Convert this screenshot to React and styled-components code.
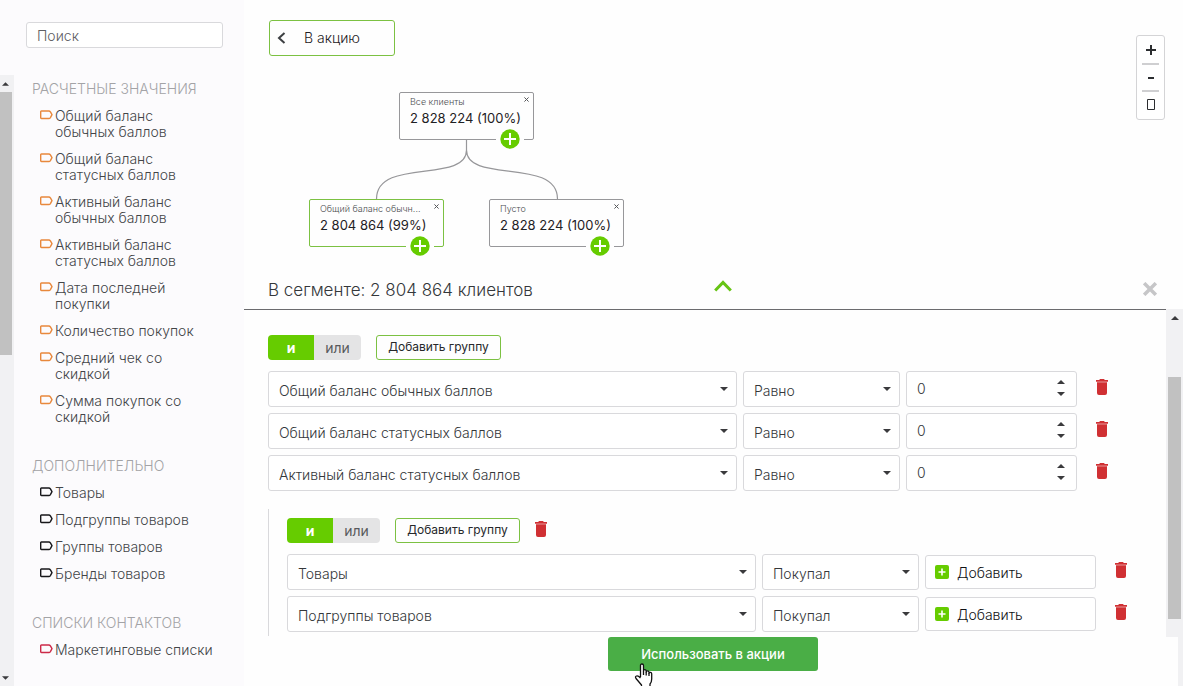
import React, { useState } from "react";
import styled, { createGlobalStyle, css } from "styled-components";

const Global = createGlobalStyle`
  *, *::before, *::after { box-sizing: border-box; }
  body { margin: 0; background: #fefefe; }
  body, button, input, select { font-family: Inter, "Open Sans", sans-serif; font-weight: 300; }
  button { padding: 0; border: 0; background: none; cursor: pointer; }
  h1, h2, ul, p { margin: 0; padding: 0; font-weight: 300; }
  ul { list-style: none; }
  svg { display: block; flex: none; }
`;

const Page = styled.div`
  display: flex;
  height: 100vh;
  color: #34373a;
  overflow: hidden;
`;

/* ---------- sidebar ---------- */
const Sidebar = styled.aside`
  flex: none;
  width: 244px;
  display: flex;
  flex-direction: column;
  background: #fcfbfd;
`;
const SearchBar = styled.div`
  height: 75px;
  flex: none;
  padding: 22px 21px 0 26px;
`;
const Search = styled.input`
  display: block;
  width: 100%;
  height: 26px;
  padding: 0 10px;
  border: 1px solid #d9d9dc;
  border-radius: 3px;
  background: #fff;
  font-size: 14px;
  color: #444;
  &::placeholder { color: #606063; opacity: 1; }
`;
const SidebarBody = styled.div`
  flex: 1;
  min-height: 0;
  display: flex;
`;
const Track = styled.div`
  flex: none;
  display: flex;
  flex-direction: column;
  align-items: ${(p) => (p.$side === "left" ? "flex-start" : "center")};
  width: ${(p) => (p.$side === "left" ? 14 : 17)}px;
  background: #f1f1f3;
`;
const TrackEnd = styled.div`
  flex: none;
  display: flex;
  width: ${(p) => p.$w}px;
  height: 17px;
  align-items: center;
  justify-content: center;
`;
const Thumb = styled.div`
  width: ${(p) => (p.$side === "left" ? 12 : 13)}px;
  height: ${(p) => p.$size};
  margin-top: ${(p) => p.$offset || "0"};
  background: #c1c1c1;
`;
const Spacer = styled.div`
  flex: 1;
`;
const Sections = styled.nav`
  flex: 1;
  min-width: 0;
  padding: 4px 29px 0 18px;
  display: flex;
  flex-direction: column;
  gap: 31px;
`;
const SectionTitle = styled.h2`
  font-size: 14px;
  line-height: 20px;
  color: #a3a3a6;
`;
const Items = styled.ul`
  display: flex;
  flex-direction: column;
  gap: 11px;
  padding: 9px 0 0 8px;
`;
const ItemLink = styled.a`
  display: flex;
  gap: 2px;
  font-size: 14px;
  line-height: 16px;
  color: #434548;
  text-decoration: none;
  svg { margin-top: 2px; color: ${(p) => p.$color}; }
`;

/* ---------- tree canvas ---------- */
const Main = styled.main`
  flex: 1;
  min-width: 0;
  display: flex;
  flex-direction: column;
`;
const Canvas = styled.section`
  position: relative;
  flex: none;
  height: 268px;
  padding: 20px 25px;
`;
const BackButton = styled.button`
  display: flex;
  align-items: center;
  gap: 18px;
  width: 126px;
  height: 36px;
  padding: 0 7px 1px;
  border: 1px solid #7cc142;
  border-radius: 3px;
  font-size: 14px;
  color: #1f2124;
`;
const Links = styled.svg`
  position: absolute;
  left: 0;
  top: 0;
`;
const Node = styled.div`
  position: absolute;
  left: ${(p) => p.$x}px;
  top: ${(p) => p.$y}px;
  width: 135px;
  height: 48px;
  padding: 4px 10px;
  border: 1px solid ${(p) => (p.$active ? "#7cc142" : "#97979a")};
  border-radius: 2px;
  background: #fefefe;
`;
const NodeTitle = styled.p`
  width: 100px;
  font-size: 9px;
  line-height: 10px;
  color: #4c4e51;
  white-space: nowrap;
`;
const NodeValue = styled.p`
  padding-top: 1px;
  font-size: 13px;
  line-height: 20px;
  font-weight: 400;
  color: #1f2124;
  white-space: nowrap;
`;
const NodeClose = styled.button`
  position: absolute;
  right: 4px;
  top: 4px;
`;
const NodeAdd = styled.button`
  position: absolute;
  right: 9px;
  bottom: -10px;
  padding: 0 4px;
  background: #fefefe;
`;
const ZoomBox = styled.div`
  position: absolute;
  right: 18px;
  top: 35px;
  width: 29px;
  height: 85px;
  padding: 0 5px;
  border: 1px solid #d4d4d6;
  border-radius: 3px;
  background: #fff;
`;
const ZoomButton = styled.button`
  display: flex;
  align-items: center;
  justify-content: center;
  width: 100%;
  height: 27px;
  color: #2b2d30;
  & + & { border-top: 2px solid #cfcfd1; }
`;

/* ---------- segment panel ---------- */
const PanelHeader = styled.header`
  flex: none;
  height: 41px;
  padding: 0 26px 0 24px;
  display: grid;
  grid-template-columns: 1fr auto 1fr;
  align-items: center;
`;
const PanelTitle = styled.h1`
  padding-top: 3px;
  font-size: 17px;
  line-height: 24px;
  white-space: nowrap;
`;
const Collapse = styled.button`
  padding: 0 0 5px 20px;
`;
const PanelClose = styled.button`
  justify-self: end;
`;
const PanelBody = styled.div`
  flex: 1;
  min-height: 0;
  display: flex;
`;
const Rules = styled.div`
  flex: 1;
  min-width: 0;
  padding: 25px 39px 0 24px;
  border-top: 1px solid #6b6b6e;
  overflow: hidden;
`;
const Group = styled.div`
  ${(p) =>
    p.$nested
      ? css`
          margin-top: 18px;
          padding: 9px 0 4px 18px;
          border-left: 1px solid #d9d9dc;
        `
      : css`
          padding-right: 19px;
        `}
`;
const GroupHead = styled.div`
  display: flex;
  align-items: center;
  gap: 15px;
  margin-bottom: 11px;
`;
const Toggle = styled.div`
  display: flex;
  border-radius: 4px;
  overflow: hidden;
`;
const ToggleButton = styled.button`
  width: ${(p) => (p.$on ? 46 : 47)}px;
  height: 25px;
  font-size: 14px;
  font-weight: ${(p) => (p.$on ? 700 : 400)};
  color: ${(p) => (p.$on ? "#fff" : "#58595c")};
  background: ${(p) => (p.$on ? "#66cc00" : "#e4e4e5")};
`;
const AddGroup = styled.button`
  height: 25px;
  width: 125px;
  padding-bottom: 2px;
  border: 1px solid #7cc142;
  border-radius: 3px;
  font-size: 12px;
  font-weight: 400;
  color: #26282b;
`;
const Rows = styled.div`
  display: flex;
  flex-direction: column;
  gap: 6px;
`;
const Row = styled.div`
  display: grid;
  grid-template-columns: minmax(0, 469fr) minmax(0, 157fr) minmax(0, 171fr) 25px;
  gap: 6px;
`;
const Field = styled.div`
  position: relative;
  height: 36px;
`;
const boxed = css`
  width: 100%;
  height: 36px;
  border: 1px solid #d9d9dc;
  border-radius: 3px;
  background: #fff;
  font-size: 14px;
  color: #34373a;
`;
const Select = styled.select`
  ${boxed}
  appearance: none;
  padding: 2px 24px 0 10px;
`;
const Caret = styled.svg`
  position: absolute;
  right: 9px;
  top: 16px;
  pointer-events: none;
`;
const NumberInput = styled.input`
  ${boxed}
  padding: 0 30px 1px 10px;
  appearance: textfield;
  &::-webkit-inner-spin-button { appearance: none; }
`;
const Steppers = styled.div`
  position: absolute;
  right: 12px;
  top: 5px;
  display: flex;
  flex-direction: column;
`;
const Step = styled.button`
  display: flex;
  align-items: center;
  height: 12px;
`;
const AddValue = styled.button`
  ${boxed}
  height: 34px;
  margin-top: 1px;
  display: flex;
  align-items: center;
  gap: 8px;
  padding: 0 9px;
  color: #0f1114;
`;
const Delete = styled.button`
  justify-self: end;
  align-self: start;
  margin-top: 8px;
`;
const DeleteGroup = styled.button`
  margin-bottom: 3px;
`;
const Footer = styled.footer`
  flex: none;
  height: 49px;
  display: flex;
  justify-content: center;
  align-items: flex-start;
  padding-left: 4px;
  border-right: 5px solid #f1f1f3;
`;
const Submit = styled.button`
  position: relative;
  width: 210px;
  height: 34px;
  border-radius: 3px;
  background: #4aae46;
  color: #fff;
  font-size: 13px;
  font-weight: 500;
`;
const Cursor = styled.svg`
  position: absolute;
  left: 26px;
  top: 26px;
`;

/* ---------- drawings ---------- */
const Tag = () => (
  <svg width="13" height="10" viewBox="0 0 13 10" fill="none" stroke="currentColor" strokeWidth="1.4" strokeLinejoin="round">
    <path d="M1.400 1h7.400q1 0 1.600.9L12 4.700 10.400 7.600q-.6.9-1.600.9H1.400q-.7 0-.7-.7V1.700Q.7 1 1.400 1z" />
  </svg>
);
const Triangle = ({ up, w = 8, h = 4 }) => (
  <svg width={w} height={h} viewBox="0 0 8 4" fill="#3a3a3d">
    <path d={up ? "M0 4L4 0l4 4z" : "M0 0h8L4 4z"} />
  </svg>
);
const Trash = () => (
  <svg width="12" height="16" viewBox="0 0 12 16" fill="#d03033">
    <path d="M4 0h4l.8 1H12v1.700H0V1h3.200zM1 3.200h10V14q0 2-2 2H3q-2 0-2-2z" />
  </svg>
);
const PlusCircle = () => (
  <svg width="20" height="20" viewBox="0 0 20 20">
    <circle cx="10" cy="10" r="9.700" fill="#66cc00" />
    <path d="M10 4v12M4 10h12" stroke="#fff" strokeWidth="2" />
  </svg>
);
const PlusSquare = () => (
  <svg width="14" height="14" viewBox="0 0 14 14">
    <rect width="14" height="14" rx="2" fill="#66cc00" />
    <path d="M7 3.500v7M3.500 7h7" stroke="#fff" strokeWidth="1.600" />
  </svg>
);
const Cross = ({ size, color, width }) => (
  <svg width={size} height={size} viewBox="0 0 12 12" stroke={color} strokeWidth={width}>
    <path d="M1 1l10 10M11 1L1 11" />
  </svg>
);

/* ---------- data ---------- */
const sections = [
  {
    title: "РАСЧЕТНЫЕ ЗНАЧЕНИЯ",
    color: "#e8883c",
    items: [
      "Общий баланс обычных баллов",
      "Общий баланс статусных баллов",
      "Активный баланс обычных баллов",
      "Активный баланс статусных баллов",
      "Дата последней покупки",
      "Количество покупок",
      "Средний чек со скидкой",
      "Сумма покупок со скидкой",
    ],
  },
  { title: "ДОПОЛНИТЕЛЬНО", color: "#17171a", items: ["Товары", "Подгруппы товаров", "Группы товаров", "Бренды товаров"] },
  { title: "СПИСКИ КОНТАКТОВ", color: "#cc2a48", items: ["Маркетинговые списки"] },
];
const nodes = [
  { title: "Все клиенты", value: "2 828 224 (100%)", x: 155, y: 92 },
  { title: "Общий баланс обычн...", value: "2 804 864 (99%)", x: 65, y: 199, active: true },
  { title: "Пусто", value: "2 828 224 (100%)", x: 245, y: 199 },
];
const balanceRules = ["Общий баланс обычных баллов", "Общий баланс статусных баллов", "Активный баланс статусных баллов"];
const productRules = ["Товары", "Подгруппы товаров"];

function Dropdown({ value, label }) {
  return (
    <Field>
      <Select aria-label={label} defaultValue={value}>
        <option>{value}</option>
      </Select>
      <Caret width="8" height="4" viewBox="0 0 8 4" fill="#3a3a3d">
        <path d="M0 0h8L4 4z" />
      </Caret>
    </Field>
  );
}

function NumberField() {
  const [value, setValue] = useState(0);
  return (
    <Field>
      <NumberInput type="number" aria-label="Значение" value={value} onChange={(e) => setValue(Number(e.target.value))} />
      <Steppers>
        <Step type="button" aria-label="Увеличить" onClick={() => setValue(value + 1)}>
          <Triangle up />
        </Step>
        <Step type="button" aria-label="Уменьшить" onClick={() => setValue(value - 1)}>
          <Triangle />
        </Step>
      </Steppers>
    </Field>
  );
}

function GroupToolbar({ removable }) {
  return (
    <GroupHead>
      <Toggle>
        <ToggleButton type="button" $on>и</ToggleButton>
        <ToggleButton type="button">или</ToggleButton>
      </Toggle>
      <AddGroup type="button">Добавить группу</AddGroup>
      {removable && (
        <DeleteGroup type="button" aria-label="Удалить группу">
          <Trash />
        </DeleteGroup>
      )}
    </GroupHead>
  );
}

export default function App() {
  return (
    <Page>
      <Global />
      <Sidebar>
        <SearchBar>
          <Search type="search" placeholder="Поиск" aria-label="Поиск" />
        </SearchBar>
        <SidebarBody>
          <Track $side="left">
            <TrackEnd $w={11}><Triangle up w={7} /></TrackEnd>
            <Thumb $side="left" $size="43%" />
            <Spacer />
            <TrackEnd $w={11}><Triangle w={7} /></TrackEnd>
          </Track>
          <Sections>
            {sections.map((s) => (
              <section key={s.title}>
                <SectionTitle>{s.title}</SectionTitle>
                <Items>
                  {s.items.map((item) => (
                    <li key={item}>
                      <ItemLink href="#" $color={s.color}>
                        <Tag />
                        <span>{item}</span>
                      </ItemLink>
                    </li>
                  ))}
                </Items>
              </section>
            ))}
          </Sections>
        </SidebarBody>
      </Sidebar>

      <Main>
        <Canvas>
          <BackButton type="button">
            <svg width="9" height="12" viewBox="0 0 9 12" fill="none" stroke="#3c3f42" strokeWidth="2">
              <path d="M7.500 1L2 6l5.500 5" />
            </svg>
            В акцию
          </BackButton>
          <Links width="400" height="260" viewBox="0 0 400 260" fill="none" stroke="#97979a" strokeWidth="1.200">
            <path d="M222.500 140v10C222.500 184 132.500 157 132.500 199M222.500 140v10C222.500 184 313.500 157 313.500 199" />
          </Links>
          {nodes.map((n) => (
            <Node key={n.x} $x={n.x} $y={n.y} $active={n.active}>
              <NodeTitle>{n.title}</NodeTitle>
              <NodeValue>{n.value}</NodeValue>
              <NodeClose type="button" aria-label="Удалить сегмент">
                <Cross size={5} color="#55575a" width={2.4} />
              </NodeClose>
              <NodeAdd type="button" aria-label="Добавить сегмент">
                <PlusCircle />
              </NodeAdd>
            </Node>
          ))}
          <ZoomBox>
            <ZoomButton type="button" aria-label="Приблизить">
              <svg width="10" height="10" viewBox="0 0 10 10" stroke="currentColor" strokeWidth="2"><path d="M5 0v10M0 5h10" /></svg>
            </ZoomButton>
            <ZoomButton type="button" aria-label="Отдалить">
              <svg width="6" height="2" viewBox="0 0 6 2" fill="currentColor"><path d="M0 0h6v2H0z" /></svg>
            </ZoomButton>
            <ZoomButton type="button" aria-label="По размеру">
              <svg width="8" height="11" viewBox="0 0 8 11" fill="none" stroke="currentColor"><path d="M.5.5h7v10h-7z" /></svg>
            </ZoomButton>
          </ZoomBox>
        </Canvas>

        <PanelHeader>
          <PanelTitle>В сегменте: 2 804 864 клиентов</PanelTitle>
          <Collapse type="button" aria-label="Свернуть">
            <svg width="18" height="12" viewBox="0 0 18 12" fill="none" stroke="#66c414" strokeWidth="3">
              <path d="M1.200 10.500L9 2.500l7.800 8" />
            </svg>
          </Collapse>
          <PanelClose type="button" aria-label="Закрыть">
            <Cross size={14} color="#c6c6c8" width={3} />
          </PanelClose>
        </PanelHeader>
        <PanelBody>
          <Rules>
            <Group>
              <GroupToolbar />
              <Rows>
                {balanceRules.map((r) => (
                  <Row key={r}>
                    <Dropdown value={r} label="Показатель" />
                    <Dropdown value="Равно" label="Условие" />
                    <NumberField />
                    <Delete type="button" aria-label="Удалить условие"><Trash /></Delete>
                  </Row>
                ))}
              </Rows>
            </Group>
            <Group $nested>
              <GroupToolbar removable />
              <Rows>
                {productRules.map((r) => (
                  <Row key={r}>
                    <Dropdown value={r} label="Показатель" />
                    <Dropdown value="Покупал" label="Условие" />
                    <AddValue type="button"><PlusSquare />Добавить</AddValue>
                    <Delete type="button" aria-label="Удалить условие"><Trash /></Delete>
                  </Row>
                ))}
              </Rows>
            </Group>
          </Rules>
          <Track $side="right">
            <TrackEnd $w={17}><Triangle up /></TrackEnd>
            <Thumb $side="right" $size="242px" $offset="51px" />
          </Track>
        </PanelBody>
        <Footer>
          <Submit type="button">
            Использовать в акции
            <Cursor width="20" height="24" viewBox="0 0 20 24" fill="#fff" stroke="#111" strokeWidth="1.300" strokeLinejoin="round">
              <path d="M6.500 14V2.500q0-1.500 1.500-1.500t1.500 1.500V8q0-1.300 1.300-1.300T12.200 8v1q.2-1.200 1.400-1.200T15 9.200v1q.2-1 1.400-.9t1.300 1.500V16q0 3-1.700 5v3H7.500v-2L2 15.500q-1.200-2 .5-2.500T6.500 15" />
              <path d="M9.500 8v4M12.200 9v3.500M15 10v3" />
            </Cursor>
          </Submit>
        </Footer>
      </Main>
    </Page>
  );
}
